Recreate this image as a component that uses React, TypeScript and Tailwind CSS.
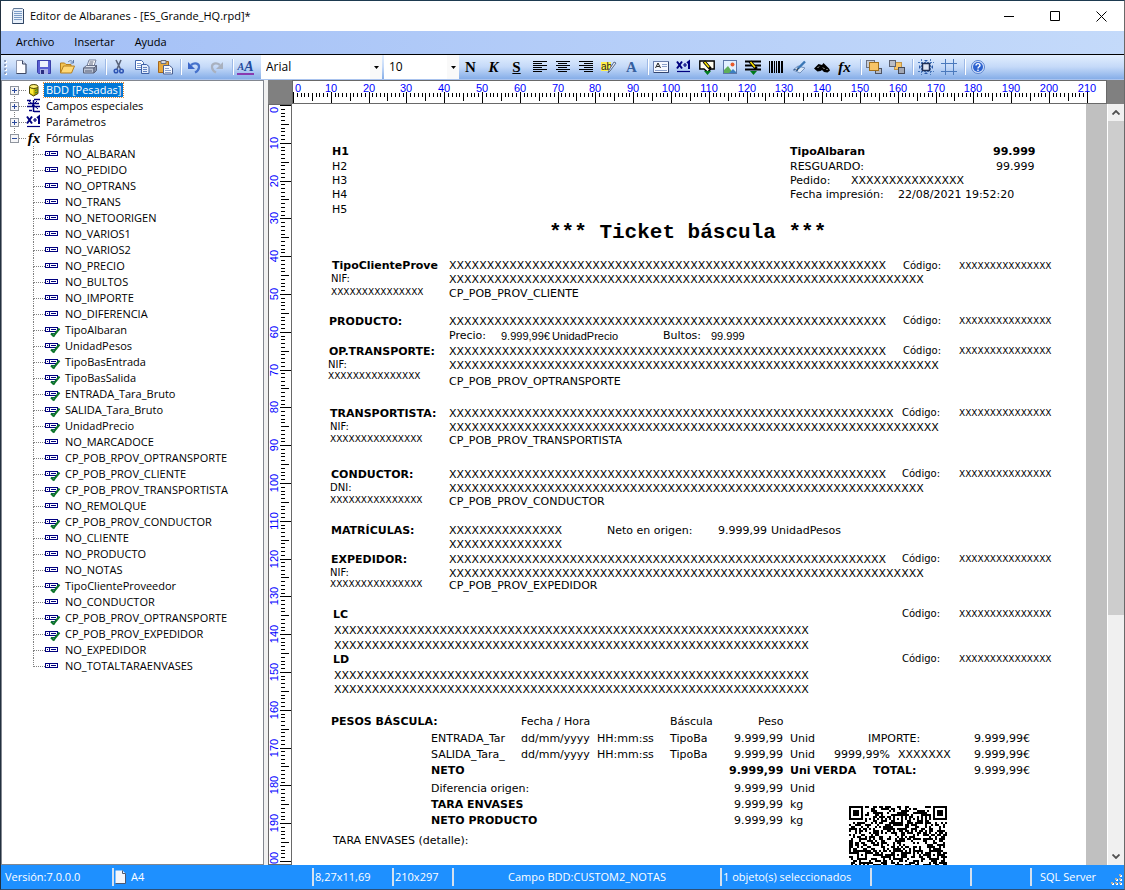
import type { ReactNode } from "react";
import { clsx } from "clsx";

/* ---------- Toolbar icons ---------- */

function Svg({ children, size = 16 }: { children: ReactNode; size?: number }) {
  return (
    <svg width={size} height={size} viewBox="0 0 16 16" aria-hidden="true">
      {children}
    </svg>
  );
}

const PageIcon = () => (
  <Svg>
    <path d="M3.500 1.500h6l3.500 3.500v9.500H3.500z" fill="#fdfdff" stroke="#8a94ad" />
    <path d="M9.500 1.500V5H13" fill="#cfd8ea" stroke="#3a4664" />
    <path d="M13 5v9.500H3.500" fill="none" stroke="#3f4a66" />
  </Svg>
);
const SaveIcon = () => (
  <Svg>
    <path d="M1.500 1.500h13v13h-12l-1-1z" fill="#5a5fd2" stroke="#3a3ea8" />
    <rect x="4" y="2" width="8" height="6" fill="#eef1fc" />
    <rect x="4" y="10" width="8" height="5" fill="#aab1e6" />
    <rect x="5" y="11" width="3" height="4" fill="#2a2e80" />
  </Svg>
);
const OpenIcon = () => (
  <Svg>
    <path d="M1.500 14V4h4l1.500 1.500h5V8" fill="#f3c453" stroke="#b57f1d" />
    <path d="M1.500 14l3-7h11l-3 7z" fill="#ffd977" stroke="#b57f1d" />
    <path d="M9 3c2-2 4-1.500 5 .5M14.500 1v3h-3" fill="none" stroke="#5a78a8" />
  </Svg>
);
const PrintIcon = () => (
  <Svg>
    <path d="M5 7l2-6h7l-2 6z" fill="#fff" stroke="#76809a" />
    <path d="M1.500 9l3-2.500h10L12 9z" fill="#dfe4ee" stroke="#6b748c" />
    <path d="M1.500 9H12v5H1.500z" fill="#bcc4d4" stroke="#5a637b" />
    <path d="M12 9l2.500-2.500v5L12 14z" fill="#8993a9" stroke="#5a637b" />
    <path d="M3 12h7M7.500 3h4M7 5h4" stroke="#555e78" />
  </Svg>
);
const CutIcon = () => (
  <Svg>
    <path d="M5 1l4.500 9M10 1L6 10" stroke="#59637a" strokeWidth="1.600" fill="none" />
    <circle cx="5" cy="12" r="1.800" fill="none" stroke="#2f55b4" strokeWidth="1.500" />
    <circle cx="10.500" cy="12" r="1.800" fill="none" stroke="#2f55b4" strokeWidth="1.500" />
  </Svg>
);
const CopyIcon = () => (
  <Svg>
    <path d="M1.500 1.500h6l2 2v7h-8z" fill="#fff" stroke="#4468ad" />
    <path d="M3 4.500h4M3 6.500h4M3 8.500h4" stroke="#7f9bd0" />
    <path d="M7.500 5.500h5l2.500 2v7H7.500z" fill="#e5edfb" stroke="#3d60a5" />
    <path d="M9 8.500h4M9 10.500h4M9 12.500h4" stroke="#6282c0" />
  </Svg>
);
const PasteIcon = () => (
  <Svg>
    <path d="M1.500 2.500h10v11h-10z" fill="#e8a93c" stroke="#a4661c" />
    <path d="M4 1.500h5v3H4z" fill="#d7dbe4" stroke="#6a6f7c" />
    <path d="M6.500 6.500h6l3 2.500v6h-9z" fill="#f4f7fd" stroke="#4c6090" />
    <path d="M8 9.500h4M8 11.500h6M8 13.500h6" stroke="#8ba0cb" />
  </Svg>
);
const UndoIcon = () => (
  <Svg>
    <path d="M5 6c4-3 8.500-1.500 8 2.500-.300 2.500-2 4-4 5" fill="none" stroke="#4672cc" strokeWidth="2.200" />
    <path d="M2 3v7h7z" fill="#3b66c8" />
  </Svg>
);
const RedoIcon = () => (
  <Svg>
    <path d="M11 6c-4-3-8.500-1.500-8 2.500.300 2.500 2 4 4 5" fill="none" stroke="#a9b1bf" strokeWidth="2.200" />
    <path d="M14 3v7H7z" fill="#a9b1bf" />
  </Svg>
);
function AlignIcon({ mode }: { mode: "left" | "center" | "right" }) {
  const widths = [14, 9, 14, 9, 14, 9];
  return (
    <Svg>
      {widths.map((w, i) => (
        <rect
          key={i}
          x={mode === "left" ? 1 : mode === "center" ? 1 + Math.floor((14 - w) / 2) : 15 - w}
          y={2 + i * 2}
          width={w}
          height="1"
          fill="#000"
        />
      ))}
    </Svg>
  );
}
const PencilGlyph = () => (
  <>
    <path d="M5 12h7l-3.500 4z" fill="#007a1c" />
    <path d="M5 2.500l6.500 7.500" stroke="#000" strokeWidth="3.400" />
    <path d="M5.500 3l4.500 5.200" stroke="#ffe600" strokeWidth="1.600" />
  </>
);
const ShapePencilIcon = () => (
  <Svg>
    <path d="M.800 2h14.400v8H12l-3.500 3L5 10H.800z" fill="#fffdf0" stroke="#000" strokeWidth="1.400" />
    <PencilGlyph />
  </Svg>
);
const LinePencilIcon = () => (
  <Svg>
    <path d="M0 2.500h16M0 6.500h16M0 10.500h16" stroke="#000" strokeWidth="1.800" />
    <PencilGlyph />
  </Svg>
);
const LabelIcon = () => (
  <Svg>
    <rect x=".5" y="2.500" width="15" height="11" fill="#f5f8ff" stroke="#6a7fae" />
    <path d="M2.500 9L5 4l2.500 5M3.500 7.500h3" stroke="#222" fill="none" />
    <path d="M9 5.500h5M9 7.500h5M2 11.500h12" stroke="#8aa0cc" />
    <path d="M15.500 3v10.500H1" stroke="#33456f" fill="none" />
  </Svg>
);
const ImageIcon = () => (
  <Svg>
    <rect x="1.500" y="1.500" width="13" height="13" fill="#e2f0ff" stroke="#5d77a8" />
    <circle cx="10.500" cy="5.500" r="2" fill="#e85a2c" />
    <path d="M2 14V11l4-4 5 7z" fill="#5fae58" />
    <path d="M7 14l4-4 3 3v1z" fill="#3c7fc0" />
  </Svg>
);
const BarcodeIcon = () => (
  <Svg>
    <path
      d="M1 2h1v12H1zM3 2h2v12H3zM6 2h1v12H6zM8 2h1v12H8zM10 2h2v12h-2zM13 2h2v12h-2z"
      fill="#000"
    />
  </Svg>
);
const SignIcon = () => (
  <Svg>
    <path d="M2 11l5-4 7 2-5 5z" fill="#dbe8f8" stroke="#7391bd" />
    <path d="M14 2.500L6.500 10" stroke="#3976b5" strokeWidth="2.400" />
    <path d="M7.500 9.500l-2.500 2" stroke="#222" />
    <path d="M3 10.500c2-1 2 2 4 1" stroke="#2c5d99" fill="none" />
  </Svg>
);
const BinocularsIcon = () => (
  <Svg>
    <path d="M0 9.500L4.500 5 8 6l1.500-2L15 9.500l1 2-2.500 2-3.500-.5-2-2-1.500 1-3 .5z" fill="#000" />
    <path d="M3.500 9l1.500-1.500M9 8.500l1.500 1.500M12.500 10l1 1" stroke="#ccc" />
  </Svg>
);
const FrontIcon = () => (
  <Svg>
    <rect x=".5" y="1.500" width="8" height="7" fill="#c9cdd6" stroke="#6b7080" />
    <rect x="9.500" y="9.500" width="6" height="5" fill="#b4b8c2" stroke="#4f5462" />
    <rect x="3.500" y="3.500" width="9" height="8" fill="#f7c467" stroke="#a06f1d" />
  </Svg>
);
const BackIcon = () => (
  <Svg>
    <rect x="5.500" y="3.500" width="7" height="7" fill="#f7c467" stroke="#c0954a" />
    <rect x=".5" y="1.500" width="6" height="6" fill="#b9bdc8" stroke="#5b6070" />
    <rect x="9.500" y="8.500" width="6" height="6" fill="#a3a8b4" stroke="#454a58" />
  </Svg>
);
const SnapIcon = () => (
  <Svg>
    <path d="M0 3.500h16M0 12.500h16M3.500 0v16M12.500 0v16" stroke="#4a79bd" strokeDasharray="2 1" />
    <rect x="4.500" y="4.500" width="7" height="7" fill="#dfe6f3" stroke="#1f2f55" strokeWidth="1.500" />
    <path d="M6 1h4L8 3zM6 15h4l-2-2zM1 6v4l2-2zM15 6v4l-2-2z" fill="#2c5aa8" />
  </Svg>
);
const GridIcon = () => (
  <Svg>
    <path d="M0 4.500h16M0 12.500h16M4.500 0v16M12.500 0v16" stroke="#4a79bd" />
  </Svg>
);
const HelpIcon = () => (
  <Svg>
    <circle cx="8" cy="8" r="6.500" fill="#d6e4fb" stroke="#5b83cf" />
    <circle cx="8" cy="8" r="5" fill="#2d62d0" />
    <path d="M6 6.500c0-2.500 4-2.500 4 0 0 1.300-2 1.300-2 3M8 10.500V12" stroke="#fff" strokeWidth="1.400" fill="none" />
  </Svg>
);
const ParamIcon = () => (
  <Svg>
    <path d="M1 2.500l5 7M6 2.500l-5 7" stroke="#00007f" strokeWidth="2" />
    <path d="M7 6h4M9 4v4" stroke="#00007f" strokeWidth="1.200" />
    <path d="M11 4l2-1.500V10" stroke="#00007f" strokeWidth="2" fill="none" />
    <path d="M1 12.500h13" stroke="#00007f" strokeWidth="1.200" />
  </Svg>
);
const FxIcon = () => (
  <span className="font-['Liberation_Serif'] text-[15px] leading-4 font-bold text-black italic">fx</span>
);
const FontIcon = () => (
  <span className="flex items-end border-b-2 border-[#8a3ab0] font-['Liberation_Serif'] leading-[13px] font-bold text-[#1f4a9c] italic">
    <span className="text-[10px]">A</span>
    <span className="text-[14px]">A</span>
  </span>
);
const HighlightIcon = () => (
  <Svg>
    <rect x="0" y="3" width="10" height="9" fill="#fff04a" />
    <text x="0" y="11" fontSize="10" fontFamily="Liberation Sans" fill="#222">
      ab
    </text>
    <path d="M15 4l-6 8-2 2 1-3 5-8z" fill="#e6ebf5" stroke="#5a6b8c" />
  </Svg>
);
const Letter = ({ children, className }: { children: string; className?: string }) => (
  <span className={clsx("font-['Liberation_Serif'] text-[15px] leading-4 font-bold", className)}>
    {children}
  </span>
);

/* ---------- Toolbar ---------- */

function ToolButton({ label, children }: { label: string; children: ReactNode }) {
  return (
    <button type="button" aria-label={label} className="flex h-6 w-[23px] shrink-0 items-center justify-center">
      {children}
    </button>
  );
}

const Separator = () => (
  <span className="flex h-6 w-[6px] shrink-0 items-center justify-end">
    <span className="h-4 w-[2px] border-r border-white bg-[#9db9e6]" />
  </span>
);

function Combo({ label, value, className }: { label: string; value: string; className: string }) {
  return (
    <div className={clsx("grid h-6 shrink-0 items-center bg-white", className)}>
      <select
        aria-label={label}
        defaultValue={value}
        className="col-start-1 row-start-1 h-6 w-full appearance-none bg-transparent pl-[5px] text-[12px] outline-none"
      >
        <option>{value}</option>
      </select>
      <span className="pointer-events-none col-start-1 row-start-1 flex h-6 w-3 items-center justify-center justify-self-end bg-[#f9f9f9]">
        <svg width="5" height="3" viewBox="0 0 5 3" aria-hidden="true">
          <path d="M0 0h5L2.500 3z" fill="#000" />
        </svg>
      </span>
    </div>
  );
}

function Toolbar() {
  return (
    <div className="flex h-[25px] shrink-0 items-start border-b border-[#a9c3ee] bg-linear-to-b from-[#e3effe] via-[#c4d9f8] to-[#86aee8]">
      <svg width="8" height="24" viewBox="0 0 8 24" aria-hidden="true">
        {[5, 9, 13, 17].map((y) => (
          <g key={y}>
            <rect x="4" y={y + 1} width="2" height="2" fill="#fff" />
            <rect x="3" y={y} width="2" height="2" fill="#8e9fbf" />
          </g>
        ))}
      </svg>
      <ToolButton label="Nuevo"><PageIcon /></ToolButton>
      <ToolButton label="Guardar"><SaveIcon /></ToolButton>
      <ToolButton label="Abrir"><OpenIcon /></ToolButton>
      <ToolButton label="Imprimir"><PrintIcon /></ToolButton>
      <Separator />
      <ToolButton label="Cortar"><CutIcon /></ToolButton>
      <ToolButton label="Copiar"><CopyIcon /></ToolButton>
      <ToolButton label="Pegar"><PasteIcon /></ToolButton>
      <Separator />
      <ToolButton label="Deshacer"><UndoIcon /></ToolButton>
      <ToolButton label="Rehacer"><RedoIcon /></ToolButton>
      <Separator />
      <ToolButton label="Fuente"><FontIcon /></ToolButton>
      <Combo label="Nombre de fuente" value="Arial" className="ml-[4px] w-[121px]" />
      <Combo label="Tamaño de fuente" value="10" className="ml-[2px] w-[75px]" />
      <ToolButton label="Negrita"><Letter>N</Letter></ToolButton>
      <ToolButton label="Cursiva"><Letter className="italic">K</Letter></ToolButton>
      <ToolButton label="Subrayado"><Letter className="underline">S</Letter></ToolButton>
      <ToolButton label="Alinear a la izquierda"><AlignIcon mode="left" /></ToolButton>
      <ToolButton label="Centrar"><AlignIcon mode="center" /></ToolButton>
      <ToolButton label="Alinear a la derecha"><AlignIcon mode="right" /></ToolButton>
      <ToolButton label="Color de fondo"><HighlightIcon /></ToolButton>
      <ToolButton label="Color de texto"><Letter className="text-[#35609f]">A</Letter></ToolButton>
      <Separator />
      <ToolButton label="Etiqueta"><LabelIcon /></ToolButton>
      <ToolButton label="Parámetro"><ParamIcon /></ToolButton>
      <ToolButton label="Forma"><ShapePencilIcon /></ToolButton>
      <ToolButton label="Imagen"><ImageIcon /></ToolButton>
      <ToolButton label="Línea"><LinePencilIcon /></ToolButton>
      <ToolButton label="Código de barras"><BarcodeIcon /></ToolButton>
      <ToolButton label="Firma"><SignIcon /></ToolButton>
      <ToolButton label="Buscar"><BinocularsIcon /></ToolButton>
      <ToolButton label="Fórmula"><FxIcon /></ToolButton>
      <Separator />
      <ToolButton label="Traer al frente"><FrontIcon /></ToolButton>
      <ToolButton label="Enviar al fondo"><BackIcon /></ToolButton>
      <Separator />
      <ToolButton label="Ajustar a la cuadrícula"><SnapIcon /></ToolButton>
      <ToolButton label="Cuadrícula"><GridIcon /></ToolButton>
      <Separator />
      <ToolButton label="Ayuda"><HelpIcon /></ToolButton>
    </div>
  );
}

/* ---------- Title bar and menu ---------- */

function TitleBar() {
  return (
    <header className="flex h-[30px] shrink-0 items-center bg-white pl-[9px]">
      <svg width="16" height="18" viewBox="0 0 16 18" aria-hidden="true">
        <path d="M3.500 1.500h9l1 1v14h-11v-12z" fill="#e8f0fa" stroke="#5f7694" />
        <path d="M4 4.500h8M4 6.500h8M4 8.500h8M4 10.500h8M4 12.500h8" stroke="#7c9cc6" />
        <path d="M13.500 2v14.500h-11" stroke="#2f4463" fill="none" />
      </svg>
      <h1 className="ml-1 flex-1 text-[11px]">Editor de Albaranes - [ES_Grande_HQ.rpd]*</h1>
      <button type="button" aria-label="Minimizar" className="flex h-full w-[46px] items-center justify-center">
        <svg width="11" height="11" viewBox="0 0 11 11" aria-hidden="true"><path d="M0 5.500h10" stroke="#000" /></svg>
      </button>
      <button type="button" aria-label="Maximizar" className="flex h-full w-[46px] items-center justify-center">
        <svg width="11" height="11" viewBox="0 0 11 11" aria-hidden="true"><path d="M.5.5h9v9h-9z" stroke="#000" fill="none" /></svg>
      </button>
      <button type="button" aria-label="Cerrar" className="flex h-full w-[46px] items-center justify-center">
        <svg width="11" height="11" viewBox="0 0 11 11" aria-hidden="true"><path d="M.5.5l10 10M10.500.5l-10 10" stroke="#000" /></svg>
      </button>
    </header>
  );
}

function MenuBar() {
  return (
    <nav className="flex h-[24px] shrink-0 items-center gap-5 border-b border-black bg-linear-to-r from-[#a3bff6] to-[#c4dafa] pl-[15px] text-[11px]">
      <button type="button">Archivo</button>
      <button type="button">Insertar</button>
      <button type="button">Ayuda</button>
    </nav>
  );
}

/* ---------- Tree ---------- */

const formulas: [string, boolean][] = [
  ["NO_ALBARAN", false],
  ["NO_PEDIDO", false],
  ["NO_OPTRANS", false],
  ["NO_TRANS", false],
  ["NO_NETOORIGEN", false],
  ["NO_VARIOS1", false],
  ["NO_VARIOS2", false],
  ["NO_PRECIO", false],
  ["NO_BULTOS", false],
  ["NO_IMPORTE", false],
  ["NO_DIFERENCIA", false],
  ["TipoAlbaran", true],
  ["UnidadPesos", true],
  ["TipoBasEntrada", true],
  ["TipoBasSalida", true],
  ["ENTRADA_Tara_Bruto", true],
  ["SALIDA_Tara_Bruto", true],
  ["UnidadPrecio", true],
  ["NO_MARCADOCE", false],
  ["CP_POB_RPOV_OPTRANSPORTE", false],
  ["CP_POB_PROV_CLIENTE", true],
  ["CP_POB_PROV_TRANSPORTISTA", true],
  ["NO_REMOLQUE", false],
  ["CP_POB_PROV_CONDUCTOR", true],
  ["NO_CLIENTE", false],
  ["NO_PRODUCTO", false],
  ["NO_NOTAS", false],
  ["TipoClienteProveedor", true],
  ["NO_CONDUCTOR", false],
  ["CP_POB_PROV_OPTRANSPORTE", true],
  ["CP_POB_PROV_EXPEDIDOR", true],
  ["NO_EXPEDIDOR", false],
  ["NO_TOTALTARAENVASES", false],
];

function FieldIcon({ checked }: { checked: boolean }) {
  return (
    <svg width="16" height="16" viewBox="0 0 16 16" aria-hidden="true">
      <g shapeRendering="crispEdges">
        <rect x=".5" y="5.500" width="12" height="4" fill="#fff" stroke="#00007f" />
        <path d="M4.500 6v3" stroke="#00007f" />
        <path d="M2 7.500h1M6 7.500h5" stroke="#00007f" />
        {checked && <path d="M6 11.500h5" stroke="#13466b" />}
      </g>
      {checked && <path d="M6 11.500l3 3M8.500 14.500l1.500-2.500M10 12l4.500-5.500" fill="none" stroke="#0b7428" strokeWidth="2" />}
    </svg>
  );
}

const DatabaseIcon = () => (
  <Svg>
    <path d="M3.500 5v6.500l4 2.500 4.500-2.500V5z" fill="#b8a800" stroke="#4a4300" />
    <path d="M4 5.500v5.500l3.500 2V7z" fill="#ffee3a" />
    <ellipse cx="7.800" cy="4.500" rx="4.200" ry="2" fill="#fff27a" stroke="#4a4300" />
    <path d="M9 8.500l2.500-1M9 11l2.500-1" stroke="#2f7d2f" />
  </Svg>
);
const SpecialIcon = () => (
  <Svg>
    <path d="M1 2.500h4M8 1.500h6M2 5.500h11M1 8.500h13M3 12.500h3M8 13.500h6M7.500 2v12" stroke="#00007f" strokeWidth="1.500" fill="none" />
    <path d="M3 3l9 8M11 3l-6 6" stroke="#00007f" />
  </Svg>
);

function RootNode({
  label,
  icon,
  open = false,
  selected = false,
  first = false,
  last = false,
}: {
  label: string;
  icon: ReactNode;
  open?: boolean;
  selected?: boolean;
  first?: boolean;
  last?: boolean;
}) {
  return (
    <div className="flex h-4 items-center pl-2">
      <button type="button" aria-label={`${open ? "Contraer" : "Expandir"} ${label}`} className="h-4">
        <svg width="16" height="16" viewBox="0 0 16 16" aria-hidden="true">
          {!first && <path d="M4.500 0v4" stroke="#808080" strokeDasharray="1 1" />}
          {!last && <path d="M4.500 12v4" stroke="#808080" strokeDasharray="1 1" />}
          <path d="M9 8.500h7" stroke="#808080" strokeDasharray="1 1" />
          <rect x=".5" y="4.500" width="8" height="8" fill="#f6f6f8" stroke="#8f959e" />
          <path d={open ? "M2 8.500h5" : "M2 8.500h5M4.500 6v5"} stroke="#2b4a9c" />
        </svg>
      </button>
      <span className="flex w-4 items-center justify-center">{icon}</span>
      <span
        className={clsx(
          "ml-[2px] px-[2px] leading-[14px]",
          selected && "bg-[#0078d7] text-white outline outline-dotted outline-[#e08a3c]",
        )}
      >
        {label}
      </span>
    </div>
  );
}

function Tree() {
  return (
    <aside className="w-[263px] shrink-0 overflow-hidden border border-[#828790] bg-white pt-px text-[11px] leading-4">
      <ul>
        <li><RootNode label="BDD [Pesadas]" icon={<DatabaseIcon />} selected first /></li>
        <li><RootNode label="Campos especiales" icon={<SpecialIcon />} /></li>
        <li><RootNode label="Parámetros" icon={<ParamIcon />} /></li>
        <li>
          <RootNode label="Fórmulas" icon={<FxIcon />} open last />
          <ul className="pl-[31px]">
            {formulas.map(([name, checked], i) => (
              <li key={name} className="flex h-4 items-center">
                <span className="flex h-4 w-[12px] flex-col">
                  <span className="h-[9px] border-b border-l border-dotted border-[#808080]" />
                  {i < formulas.length - 1 && (
                    <span className="h-[7px] border-l border-dotted border-[#808080]" />
                  )}
                </span>
                <FieldIcon checked={checked} />
                <span className="ml-[4px]">{name}</span>
              </li>
            ))}
          </ul>
        </li>
      </ul>
    </aside>
  );
}

/* ---------- Rulers ---------- */

const PX_PER_MM = 96 / 25.4;

function HorizontalRuler() {
  const marks = Array.from({ length: 211 }, (_, i) => i);
  return (
    <svg width="814" height="22" aria-hidden="true" className="block">
      {marks.map((mm) => {
        const x = Math.round(mm * PX_PER_MM);
        const top = mm % 10 === 0 ? 11 : 12;
        const bottom = mm % 10 === 0 ? 22 : mm % 5 === 0 ? 20 : 16;
        return <rect key={mm} x={x} y={top} width="1" height={bottom - top} fill="#000" />;
      })}
      {marks
        .filter((mm) => mm % 10 === 0)
        .map((mm) => (
          <text
            key={mm}
            x={Math.max(5, Math.round(mm * PX_PER_MM))}
            y="11"
            textAnchor="middle"
            fontSize="11"
            fontFamily="Liberation Sans"
            fill="#0000ff"
          >
            {mm}
          </text>
        ))}
    </svg>
  );
}

function VerticalRuler() {
  const marks = Array.from({ length: 201 }, (_, i) => i);
  return (
    <svg width="22" height="776" aria-hidden="true" className="block">
      {marks.map((mm) => {
        const y = Math.round(mm * PX_PER_MM);
        const left = mm % 10 === 0 ? 11 : 12;
        const right = mm % 10 === 0 ? 22 : mm % 5 === 0 ? 20 : 16;
        return <rect key={mm} x={left} y={y} width={right - left} height="1" fill="#000" />;
      })}
      {marks
        .filter((mm) => mm % 10 === 0)
        .map((mm) => {
          const y = Math.max(5, Math.round(mm * PX_PER_MM));
          return (
            <text
              key={mm}
              transform={`rotate(-90 9 ${y})`}
              x="9"
              y={y}
              textAnchor="middle"
              fontSize="11"
              fontFamily="Liberation Sans"
              fill="#0000ff"
            >
              {mm}
            </text>
          );
        })}
    </svg>
  );
}

/* ---------- Report page ---------- */

type Style = "text" | "bold" | "small" | "tiny" | "arial" | "title";
type Item = [x: number, y: number, text: string, style?: Style];

const styles: Record<Style, string> = {
  text: "font-['DejaVu_Sans'] text-[11px]",
  bold: "font-['DejaVu_Sans'] text-[11px] font-bold",
  small: "font-['DejaVu_Sans'] text-[10px]",
  tiny: "font-['DejaVu_Sans'] text-[9px]",
  arial: "font-['Liberation_Sans'] text-[11px]",
  title: "font-['Liberation_Mono'] text-[21px] font-bold",
};

const mask = (n: number) => "X".repeat(n);

/* Each field: left edge and vertical centre on the page, in pixels. */
const items: Item[] = [
  [40, 48, "H1", "bold"],
  [40, 63, "H2"],
  [40, 77, "H3"],
  [40, 91, "H4"],
  [40, 106, "H5"],
  [498, 48, "TipoAlbaran", "bold"],
  [701, 48, "99.999", "bold"],
  [498, 63, "RESGUARDO:"],
  [704, 63, "99.999"],
  [498, 77, "Pedido:"],
  [559, 77, mask(15)],
  [498, 91, "Fecha impresión:"],
  [606, 91, "22/08/2021 19:52:20"],
  [257, 129, "*** Ticket báscula ***", "title"],

  [40, 162, "TipoClienteProve", "bold"],
  [157, 162, mask(58)],
  [611, 162, "Código:", "small"],
  [667, 162, mask(15), "tiny"],
  [39, 175, "NIF:", "small"],
  [157, 176, mask(63)],
  [39, 188, mask(15), "tiny"],
  [157, 190, "CP_POB_PROV_CLIENTE"],

  [37, 218, "PRODUCTO:", "bold"],
  [157, 218, mask(58)],
  [611, 217, "Código:", "small"],
  [667, 217, mask(15), "tiny"],
  [157, 232, "Precio:"],
  [209, 232, "9.999,99€", "arial"],
  [260, 232, "UnidadPrecio", "arial"],
  [371, 232, "Bultos:"],
  [419, 232, "99.999", "arial"],

  [37, 248, "OP.TRANSPORTE:", "bold"],
  [157, 248, mask(58)],
  [611, 247, "Código:", "small"],
  [667, 247, mask(15), "tiny"],
  [36, 261, "NIF:", "small"],
  [157, 262, mask(65)],
  [36, 272, mask(15), "tiny"],
  [157, 278, "CP_POB_PROV_OPTRANSPORTE"],

  [38, 310, "TRANSPORTISTA:", "bold"],
  [157, 310, mask(59)],
  [610, 309, "Código:", "small"],
  [667, 309, mask(15), "tiny"],
  [38, 323, "NIF:", "small"],
  [157, 324, mask(65)],
  [38, 335, mask(15), "tiny"],
  [157, 337, "CP_POB_PROV_TRANSPORTISTA"],

  [39, 371, "CONDUCTOR:", "bold"],
  [157, 371, mask(58)],
  [610, 370, "Código:", "small"],
  [667, 370, mask(15), "tiny"],
  [38, 384, "DNI:", "small"],
  [157, 385, mask(63)],
  [38, 396, mask(15), "tiny"],
  [157, 398, "CP_POB_PROV_CONDUCTOR"],

  [39, 427, "MATRÍCULAS:", "bold"],
  [157, 427, mask(15)],
  [157, 441, mask(15)],
  [315, 427, "Neto en origen:"],
  [426, 427, "9.999,99"],
  [479, 427, "UnidadPesos"],

  [39, 456, "EXPEDIDOR:", "bold"],
  [157, 456, mask(58)],
  [610, 455, "Código:", "small"],
  [667, 455, mask(15), "tiny"],
  [38, 469, "NIF:", "small"],
  [157, 470, mask(63)],
  [38, 480, mask(15), "tiny"],
  [157, 482, "CP_POB_PROV_EXPEDIDOR"],

  [41, 511, "LC", "bold"],
  [610, 510, "Código:", "small"],
  [667, 510, mask(15), "tiny"],
  [42, 527, mask(63)],
  [42, 542, mask(63)],
  [41, 556, "LD", "bold"],
  [610, 555, "Código:", "small"],
  [667, 555, mask(15), "tiny"],
  [42, 572, mask(63)],
  [42, 586, mask(63)],

  [39, 618, "PESOS BÁSCULA:", "bold"],
  [229, 618, "Fecha / Hora"],
  [378, 618, "Báscula"],
  [466, 618, "Peso"],

  [139, 635, "ENTRADA_Tar"],
  [229, 635, "dd/mm/yyyy"],
  [305, 635, "HH:mm:ss"],
  [378, 635, "TipoBa"],
  [442, 635, "9.999,99"],
  [498, 635, "Unid"],
  [576, 635, "IMPORTE:"],
  [682, 635, "9.999,99€"],

  [139, 651, "SALIDA_Tara_"],
  [229, 651, "dd/mm/yyyy"],
  [305, 651, "HH:mm:ss"],
  [378, 651, "TipoBa"],
  [442, 651, "9.999,99"],
  [498, 651, "Unid"],
  [542, 651, "9999,99%"],
  [606, 651, mask(7)],
  [682, 651, "9.999,99€"],

  [139, 667, "NETO", "bold"],
  [437, 667, "9.999,99", "bold"],
  [498, 667, "Uni", "bold"],
  [522, 667, "VERDA", "bold"],
  [581, 667, "TOTAL:", "bold"],
  [682, 667, "9.999,99€"],

  [139, 685, "Diferencia origen:"],
  [442, 685, "9.999,99"],
  [498, 685, "Unid"],
  [139, 701, "TARA ENVASES", "bold"],
  [442, 701, "9.999,99"],
  [498, 701, "kg"],
  [139, 717, "NETO PRODUCTO", "bold"],
  [442, 717, "9.999,99"],
  [498, 717, "kg"],
  [41, 737, "TARA ENVASES (detalle):"],
];

const QR_SIZE = 49;

/* Dark modules of a version 8 symbol: finder, timing and alignment patterns over data. */
function qrPath() {
  let seed = 20210822;
  const random = () => {
    seed = (seed * 1103515245 + 12345) % 2147483648;
    return seed / 2147483648;
  };
  const ring = (x: number, y: number, cx: number, cy: number) =>
    Math.max(Math.abs(x - cx), Math.abs(y - cy));
  const finders = [[3, 3], [45, 3], [3, 45]];
  const alignments = [[24, 6], [6, 24], [24, 24], [42, 24], [24, 42], [42, 42]];
  let d = "";
  for (let y = 0; y < QR_SIZE; y++) {
    for (let x = 0; x < QR_SIZE; x++) {
      let dark = random() < 0.5;
      if (x === 6 || y === 6) dark = (x + y) % 2 === 0;
      for (const [cx, cy] of alignments) {
        const r = ring(x, y, cx, cy);
        if (r <= 2) dark = r !== 1;
      }
      for (const [cx, cy] of finders) {
        const r = ring(x, y, cx, cy);
        if (r <= 4) dark = r !== 2 && r !== 4;
      }
      if (dark) d += `M${x} ${y}h1v1h-1z`;
    }
  }
  return d;
}

function ReportPage() {
  return (
    <div className="relative h-[1123px] w-[794px] shrink-0 bg-white text-black">
      {items.map(([x, y, text, style = "text"], i) => (
        <span
          key={i}
          className={clsx("absolute leading-4 whitespace-nowrap", styles[style])}
          style={{ left: x, top: y - 8 }}
        >
          {text}
        </span>
      ))}
      <svg
        width="98"
        height="98"
        viewBox="0 0 49 49"
        shapeRendering="crispEdges"
        className="absolute top-[702px] left-[557px]"
        role="img"
        aria-label="Código QR"
      >
        <path d={qrPath()} fill="#000" />
      </svg>
    </div>
  );
}

function ScrollArrow({ up = false }: { up?: boolean }) {
  return (
    <button
      type="button"
      aria-label={up ? "Desplazar arriba" : "Desplazar abajo"}
      className="flex h-[17px] shrink-0 items-center justify-center"
    >
      <svg width="8" height="5" viewBox="0 0 8 5" aria-hidden="true">
        <path d={up ? "M.5 4.500L4 1l3.500 3.500" : "M.5.5L4 4 7.500.5"} fill="none" stroke="#505050" strokeWidth="1.800" />
      </svg>
    </button>
  );
}

function Designer() {
  return (
    <main className="grid min-w-0 flex-1 grid-cols-[24px_minmax(0,1fr)_17px] grid-rows-[24px_minmax(0,1fr)]">
      <div className="bg-[#808080]" />
      <div className="overflow-hidden border border-[#696969] bg-white">
        <HorizontalRuler />
      </div>
      <div className="bg-[#808080]" />
      <div className="overflow-hidden border border-[#696969] bg-white">
        <VerticalRuler />
      </div>
      <div className="overflow-hidden bg-[#c0c0c0]">
        <ReportPage />
      </div>
      <div className="flex flex-col border-l border-white bg-[#f0f0f0]">
        <ScrollArrow up />
        <div className="flex-1">
          <div className="h-[68%] bg-[#cdcdcd]" />
        </div>
        <ScrollArrow />
      </div>
    </main>
  );
}

/* ---------- Status bar ---------- */

function StatusCell({ children, className }: { children?: ReactNode; className?: string }) {
  return (
    <div className={clsx("flex h-[18px] shrink-0 items-center border-l-2 border-[#d4e0ee] whitespace-nowrap", className)}>
      {children}
    </div>
  );
}

function StatusBar() {
  return (
    <footer className="flex h-[24px] shrink-0 items-center bg-[#1e90ff] text-[11px] text-white">
      <div className="w-[111px] shrink-0 pl-1">Versión:7.0.0.0</div>
      <StatusCell className="w-[200px] gap-px">
        <Svg><path d="M1.500 1.500h7l3 3v10h-10z" fill="#f4f6fb" /><path d="M8.500 1.500v3h3v10h-10" fill="none" stroke="#4d5870" /></Svg>
        A4
      </StatusCell>
      <StatusCell className="w-[80px] pl-px">8,27x11,69</StatusCell>
      <StatusCell className="w-[60px] pl-px">210x297</StatusCell>
      <StatusCell className="min-w-0 flex-1 justify-center">Campo BDD:CUSTOM2_NOTAS</StatusCell>
      <StatusCell className="w-[150px] pl-px">1 objeto(s) seleccionados</StatusCell>
      <StatusCell className="w-[100px]" />
      <StatusCell className="w-[60px]" />
      <StatusCell className="w-[94px] justify-between pl-[8px]">
        SQL Server
        <svg width="13" height="13" viewBox="0 0 13 13" aria-hidden="true" className="self-end">
          {[[8, 1], [8, 5], [4, 5], [8, 9], [4, 9], [0, 9]].map(([x, y]) => (
            <g key={`${x}-${y}`}>
              <rect x={x + 1} y={y + 1} width="2" height="2" fill="#fff" />
              <rect x={x} y={y} width="2" height="2" fill="#b3ada0" />
            </g>
          ))}
        </svg>
      </StatusCell>
    </footer>
  );
}

export default function App() {
  return (
    <div className="flex h-screen flex-col overflow-hidden border border-t-[#1d3a50] border-r-[#696969] border-b-[#2c4f78] border-l-[#22303f] bg-[#f0f0f0] font-['Open_Sans',sans-serif] text-black">
      <TitleBar />
      <MenuBar />
      <Toolbar />
      <div className="flex min-h-0 flex-1 gap-1">
        <Tree />
        <Designer />
      </div>
      <StatusBar />
    </div>
  );
}
